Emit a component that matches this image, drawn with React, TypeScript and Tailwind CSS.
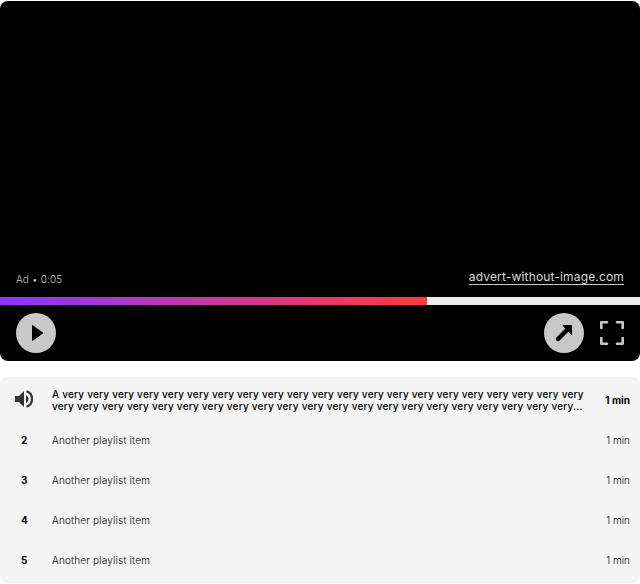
const items = [2, 3, 4, 5];
const longTitle = "A " + "very ".repeat(41) + "very...";

export default function App() {
  return (
    <div className="flex w-[640px] flex-col pt-px font-['Inter',sans-serif]">
      <div className="flex h-[360px] flex-col overflow-hidden rounded-lg bg-black">
        <div className="flex h-[296px] items-end justify-between px-4">
          <span className="mb-[10px] text-[10px] leading-4 font-light tracking-[0.15px] text-[#c8c8c8]">Ad • 0:05</span>
          <a className="mb-[12px] border-b border-[#c8c8c8] text-xs leading-[15px] font-normal tracking-[0.16px] text-[#d8d8d8]">advert-without-image.com</a>
        </div>
        <div className="h-2 shrink-0 bg-[#eeeeee]">
          <div className="h-2 w-[427px] bg-linear-to-r/srgb from-[#8a38ff] to-[#ff3b3b]" />
        </div>
        <div className="flex items-center px-4 pt-2">
          <button className="flex size-10 items-center justify-center rounded-full bg-[#c8c8c8]">
            <svg width="40" height="40" viewBox="0 0 40 40">
              <path d="M16.500 12.500v15l10.300-7.500z" stroke="#000" strokeWidth="1" strokeLinejoin="round" />
            </svg>
          </button>
          <button className="ml-auto flex size-10 items-center justify-center rounded-full bg-[#c8c8c8]">
            <svg width="40" height="40" viewBox="0 0 40 40">
              <path d="M14 26 24 16" stroke="#000" strokeWidth="4.500" strokeLinecap="round" />
              <path d="M19 12.500H27.500V21.500Z" stroke="#000" strokeWidth="1" strokeLinejoin="round" />
            </svg>
          </button>
          <button className="ml-4">
            <svg width="24" height="24" viewBox="0 0 24 24" fill="none" stroke="#c8c8c8" strokeWidth="2.600" strokeLinecap="round" strokeLinejoin="round">
              <path d="M1.300 7V1.300H7M17 1.300h5.700V7M22.700 17v5.700H17M7 22.700H1.300V17" />
            </svg>
          </button>
        </div>
      </div>
      <ul className="mt-4 flex flex-col rounded-lg bg-[#f4f4f4] pt-[3px] pb-[3px] text-[10px] text-black">
        <li className="flex h-10 items-center">
          <span className="-mt-[2px] flex w-[52px] pl-3">
            <svg width="24" height="24" viewBox="0 0 24 24" fill="#333">
              <path d="M3 9v6h4l5 5V4L7 9H3zm13.500 3A4.500 4.500 0 0 0 14 7.970v8.050c1.480-.730 2.500-2.250 2.500-4.020z" />
              <path d="M14.500 4.300c3.300.9 5.500 4 5.500 7.700s-2.200 6.800-5.500 7.700" fill="none" stroke="#333" strokeWidth="2.200" />
            </svg>
          </span>
          <span className="w-[538px] leading-3 font-medium tracking-[0.22px] text-black">{longTitle}</span>
          <span className="ml-auto pr-[10px] font-bold text-black">1 min</span>
        </li>
        {items.map((n) => (
          <li key={n} className="flex h-10 items-center">
            <span className="w-[52px] pl-[21px] font-bold text-black">{n}</span>
            <span className="font-light tracking-[0.18px]">Another playlist item</span>
            <span className="ml-auto pr-[10px] font-light">1 min</span>
          </li>
        ))}
      </ul>
    </div>
  );
}
